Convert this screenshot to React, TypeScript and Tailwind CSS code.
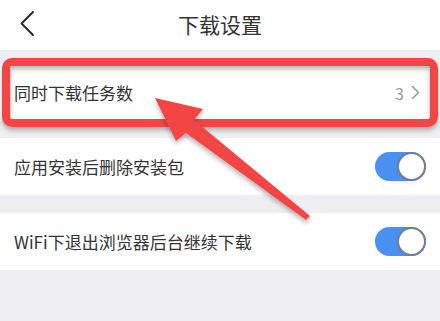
function Toggle() {
  return (
    <div className="relative w-[51px] h-[29px] rounded-full bg-[#4a8ff2]">
      <div className="absolute right-0 top-0 w-[29px] h-[29px] rounded-full bg-white border-[2px] border-[#6f7f94]" />
    </div>
  )
}

function Row({ label, children, className = '' }: { label: string; children: React.ReactNode; className?: string }) {
  return (
    <div className={`bg-white h-[57px] flex items-center justify-between pl-[14px] pr-[14px] ${className}`}>
      <span className="text-[17px] text-[#333]">{label}</span>
      {children}
    </div>
  )
}

export default function App() {
  return (
    <div
      className="relative w-[440px] h-[321px] overflow-hidden bg-[#efeef3]"
      style={{ fontFamily: '"Noto Sans CJK SC", "Noto Sans", sans-serif' }}
    >
      <div className="bg-white h-[50px] relative flex items-center justify-center">
        <svg className="absolute left-[19px] top-[10px]" width="16" height="28" viewBox="0 0 16 28">
          <polyline points="14,2 2.5,13.5 14,25" fill="none" stroke="#222" strokeWidth="1.8" strokeLinecap="round" strokeLinejoin="round" />
        </svg>
        <span className="text-[21px] text-[#333]">下载设置</span>
      </div>

      <Row label="同时下载任务数" className="mt-[14px]">
        <div className="flex items-center gap-[7px] text-[#999] pr-[6px]">
          <span className="text-[16px]">3</span>
          <svg width="9" height="15" viewBox="0 0 9 15">
            <polyline points="1.5,1.5 7.5,7.5 1.5,13.5" fill="none" stroke="#999" strokeWidth="1.5" strokeLinecap="round" strokeLinejoin="round" />
          </svg>
        </div>
      </Row>
      <Row label="应用安装后删除安装包" className="mt-[17px]">
        <Toggle />
      </Row>
      <Row label="WiFi下退出浏览器后台继续下载" className="mt-[18px] h-[56px]">
        <Toggle />
      </Row>

      {/* annotation overlay */}
      <svg className="absolute inset-0 pointer-events-none" width="440" height="321" viewBox="0 0 440 321">
        <defs>
          <filter id="sh" x="-10%" y="-20%" width="120%" height="160%">
            <feDropShadow dx="0" dy="3" stdDeviation="2.5" floodColor="#000" floodOpacity="0.3" />
          </filter>
        </defs>
        <rect x="6" y="62" width="428" height="61" rx="6" fill="none" stroke="#f44545" strokeWidth="8" filter="url(#sh)" />
        <polygon
          points="155,98 203,109 194,120 310,216 306,220 186,133 176,141"
          fill="#f44545"
          filter="url(#sh)"
        />
      </svg>
    </div>
  )
}
